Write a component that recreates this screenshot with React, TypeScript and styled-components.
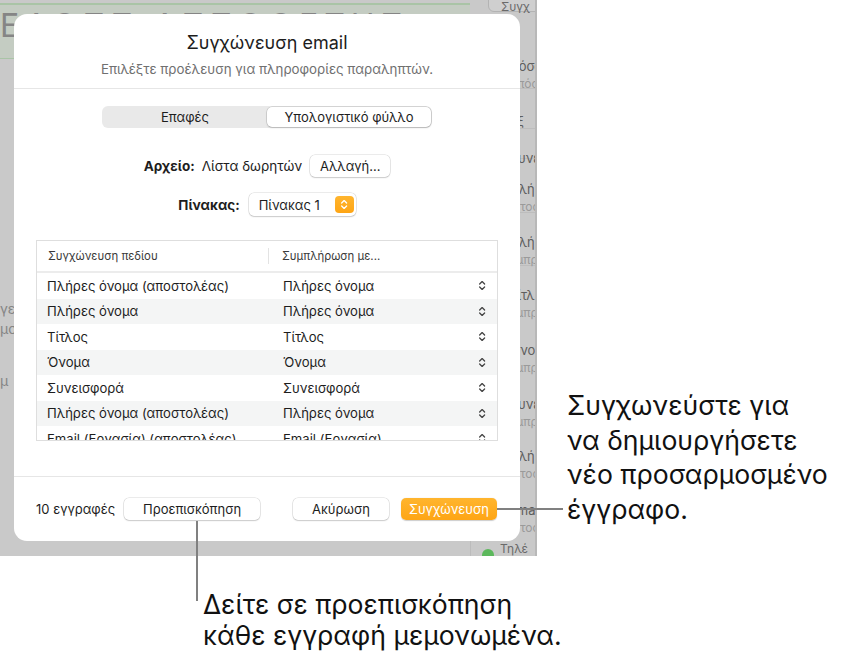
import React from "react";
import styled, { createGlobalStyle } from "styled-components";

const Global = createGlobalStyle`
  html, body { margin: 0; padding: 0; background: #fff; }
  body { font-family: Inter, "Noto Sans", sans-serif; -webkit-font-smoothing: antialiased; }
  * { box-sizing: border-box; }
`;

type Row = { field: string; value: string };

const rows: Row[] = [
  { field: "Πλήρες όνομα (αποστολέας)", value: "Πλήρες όνομα" },
  { field: "Πλήρες όνομα", value: "Πλήρες όνομα" },
  { field: "Τίτλος", value: "Τίτλος" },
  { field: "Όνομα", value: "Όνομα" },
  { field: "Συνεισφορά", value: "Συνεισφορά" },
  { field: "Πλήρες όνομα (αποστολέας)", value: "Πλήρες όνομα" },
  { field: "Email (Εργασία) (αποστολέας)", value: "Email (Εργασία)" },
];

// fragments of the app behind the sheet, only their first letters show
const sideItems = [
  { top: 44, title: "Πόσο", sub: "Υπόσ" },
  { top: 99, title: "Εξ", sub: "" },
  { top: 136, title: "Συνεύ", sub: "" },
  { top: 167, title: "Πλήρ", sub: "Ιστοσ" },
  { top: 220, title: "Πλήρ", sub: "Εμπρσ" },
  { top: 273, title: "Τίτλ", sub: "Εμπρσ" },
  { top: 328, title: "Όνομ", sub: "Εμπρσ" },
  { top: 382, title: "Συνε", sub: "Εμπρσ" },
  { top: 434, title: "Πλήρ", sub: "Ιστοσ" },
  { top: 488, title: "Email", sub: "Ιστοσ" },
];

const Page = styled.div`
  position: relative;
  width: 846px;
  height: 654px;
  background: #fff;
  overflow: hidden;
`;

const Shot = styled.div`
  position: relative;
  width: 537px;
  height: 556px;
  padding: 14px 0 0 14px;
  background: #c9c9c9;
  border-right: 2px solid #b8b8b8;
  overflow: hidden;
`;

const Backdrop = styled.div`
  position: absolute;
  inset: 0;
  z-index: 0;
`;

const TopBand = styled.div`
  position: absolute;
  left: 0;
  top: 3px;
  width: 470px;
  height: 56px;
  background: #c4ccc2;
  border-top: 2px solid #a9c4a6;
  border-bottom: 1px solid #a9c4a6;
  overflow: hidden;
  font-size: 32px;
  letter-spacing: 6px;
  color: #858585;
  line-height: 1;
  padding: 5px 0 0 0;
  white-space: nowrap;
`;

const TopTab = styled.div`
  position: absolute;
  left: 488px;
  top: -10px;
  width: 60px;
  height: 22px;
  border: 1px solid #b3b3b3;
  border-radius: 6px;
  background: #cfcfcf;
  font-size: 12px;
  color: #6a6a6a;
  padding: 8px 0 0 12px;
`;

const SideBar = styled.div`
  position: absolute;
  left: 470px;
  top: 14px;
  width: 80px;
  bottom: 0;
  border-left: 1px solid #bcbcbc;
`;

const SideItem = styled.div<{ $top: number }>`
  position: absolute;
  left: 38px;
  top: ${(p) => p.$top}px;
  font-size: 13px;
  line-height: 17px;
  color: #5e5e5e;
  white-space: nowrap;
`;

const SideSub = styled.div`
  color: #9a9a9a;
  font-size: 12px;
`;

const SideLine = styled.div<{ $top: number }>`
  position: absolute;
  left: 38px;
  right: 0;
  top: ${(p) => p.$top}px;
  height: 1px;
  background: #bdbdbd;
`;

const LeftText = styled.div<{ $top: number }>`
  position: absolute;
  left: -18px;
  top: ${(p) => p.$top}px;
  font-size: 14px;
  color: #858585;
  white-space: nowrap;
`;

const Dot = styled.div`
  position: absolute;
  left: 482px;
  top: 549px;
  width: 12px;
  height: 12px;
  border-radius: 50%;
  background: #5cb85c;
`;

const BottomText = styled.div`
  position: absolute;
  left: 500px;
  top: 541px;
  font-size: 12px;
  color: #6a6a6a;
`;

const Dialog = styled.div`
  position: relative;
  z-index: 1;
  width: 506px;
  height: 527px;
  background: #fff;
  border-radius: 13px;
  display: flex;
  flex-direction: column;
  overflow: hidden;
`;

const Header = styled.div`
  display: flex;
  flex-direction: column;
  align-items: center;
  height: 75px;
  padding-top: 18px;
  border-bottom: 1px solid #e6e6e6;
`;

const Title = styled.div`
  font-size: 18px;
  line-height: 22px;
  color: #1d1d1d;
`;

const Subtitle = styled.div`
  margin-top: 7px;
  font-size: 13.3px;
  line-height: 16px;
  color: #707070;
`;

const Body = styled.div`
  flex: 1;
  display: flex;
  flex-direction: column;
  align-items: center;
  padding-top: 17px;
  border-bottom: 1px solid #e6e6e6;
`;

const Segmented = styled.div`
  display: flex;
  width: 330px;
  height: 22px;
  padding: 1px;
  background: #e9e9e9;
  border-radius: 6px;
`;

const Segment = styled.div<{ $active?: boolean }>`
  flex: ${(p) => (p.$active ? "0 0 164px" : "1")};
  display: flex;
  align-items: center;
  justify-content: center;
  font-size: 13px;
  color: #1d1d1d;
  border-radius: 5px;
  background: ${(p) => (p.$active ? "#fff" : "transparent")};
  box-shadow: ${(p) =>
    p.$active ? "0 0 0 0.5px rgba(0,0,0,0.18), 0 1px 2px rgba(0,0,0,0.14)" : "none"};
`;

const FormRow = styled.div<{ $mt: number }>`
  display: flex;
  align-items: center;
  gap: 7px;
  margin-top: ${(p) => p.$mt}px;
  font-size: 13.5px;
  color: #1d1d1d;
`;

const Label = styled.span`
  font-weight: 700;
`;

const Button = styled.div<{ $w: number; $primary?: boolean }>`
  width: ${(p) => p.$w}px;
  height: 22px;
  display: flex;
  align-items: center;
  justify-content: center;
  font-size: 13px;
  border-radius: 5px;
  color: ${(p) => (p.$primary ? "#fff" : "#1d1d1d")};
  background: ${(p) => (p.$primary ? "linear-gradient(#ffb52e, #fea515)" : "#fff")};
  box-shadow: ${(p) =>
    p.$primary
      ? "0 0.5px 1px rgba(0,0,0,0.2)"
      : "0 0 0 0.5px rgba(0,0,0,0.16), 0 1px 1.5px rgba(0,0,0,0.14)"};
`;

const Popup = styled.div`
  width: 107px;
  height: 23px;
  display: flex;
  align-items: center;
  justify-content: space-between;
  padding: 0 2px 0 10px;
  border-radius: 5px;
  background: #fff;
  box-shadow: 0 0 0 0.5px rgba(0,0,0,0.16), 0 1px 1.5px rgba(0,0,0,0.14);
  margin-left: 2px;
  font-size: 13px;
`;

const Stepper = styled.div`
  width: 19px;
  height: 17px;
  border-radius: 4px;
  background: linear-gradient(#ffb52e, #fea515);
  display: flex;
  align-items: center;
  justify-content: center;
`;

const Table = styled.div`
  margin-top: 24px;
  width: 462px;
  height: 201px;
  border: 1px solid #dedede;
  overflow: hidden;
`;

const HeadRow = styled.div`
  display: flex;
  height: 32px;
  align-items: center;
  border-bottom: 2px solid #ececec;
  font-size: 11.4px;
  color: #3a3a3a;
`;

const HeadCell = styled.div<{ $sep?: boolean }>`
  width: ${(p) => (p.$sep ? "auto" : "231px")};
  flex: ${(p) => (p.$sep ? "1" : "none")};
  padding-left: ${(p) => (p.$sep ? "13px" : "11px")};
  border-left: ${(p) => (p.$sep ? "1px solid #e3e3e3" : "none")};
  line-height: 16px;
`;

const DataRow = styled.div<{ $alt: boolean }>`
  display: flex;
  align-items: center;
  height: 25.5px;
  font-size: 13.1px;
  color: #1d1d1d;
  background: ${(p) => (p.$alt ? "#f4f5f5" : "#fff")};
  white-space: nowrap;
`;

const FieldCell = styled.div`
  width: 246px;
  padding-left: 10px;
`;

const ValueCell = styled.div`
  flex: 1;
  display: flex;
  align-items: center;
  justify-content: space-between;
  padding-right: 11px;
`;

const Footer = styled.div`
  display: flex;
  align-items: center;
  height: 64px;
  padding: 0 23px 0 22px;
`;

const Count = styled.span`
  font-size: 13px;
  color: #1d1d1d;
  margin-right: 9px;
`;

const Spacer = styled.div`
  flex: 1;
`;

const HLine = styled.div`
  position: absolute;
  left: 497px;
  top: 508px;
  width: 66px;
  height: 2px;
  background: #808080;
  z-index: 2;
`;

const VLine = styled.div`
  position: absolute;
  left: 196px;
  top: 521px;
  width: 2px;
  height: 80px;
  background: #808080;
  z-index: 2;
`;

const Callout = styled.div<{ $left: number; $top: number; $lh: number }>`
  position: absolute;
  left: ${(p) => p.$left}px;
  top: ${(p) => p.$top}px;
  font-size: 26.6px;
  line-height: ${(p) => p.$lh}px;
  color: #111;
  white-space: nowrap;
`;

const UpDown = ({ color = "#444", size = 11 }: { color?: string; size?: number }) => (
  <svg width={size * 0.75} height={size} viewBox="0 0 8 12" fill="none">
    <path d="M1.3 4.4 L4 1.7 L6.7 4.4" stroke={color} strokeWidth="1.4" strokeLinecap="round" strokeLinejoin="round" />
    <path d="M1.3 7.6 L4 10.3 L6.7 7.6" stroke={color} strokeWidth="1.4" strokeLinecap="round" strokeLinejoin="round" />
  </svg>
);

export default function App() {
  return (
    <Page>
      <Global />
      <Shot>
        <Backdrop>
          <TopBand>ΕΛΟΣΣ ΑΣΣΟΘΕΤΗΣ</TopBand>
          <TopTab>Συγχ</TopTab>
          <SideBar>
            {[74, 114, 144, 198, 251].map((t) => (
              <SideLine key={t} $top={t} />
            ))}
            {sideItems.map((s, i) => (
              <SideItem key={i} $top={s.top}>
                {s.title}
                {s.sub && <SideSub>{s.sub}</SideSub>}
              </SideItem>
            ))}
          </SideBar>
          <LeftText $top={300}>Συγε</LeftText>
          <LeftText $top={320}>Σημσ</LeftText>
          <LeftText $top={372}>Σύμ</LeftText>
          <Dot />
          <BottomText>Τηλέ</BottomText>
        </Backdrop>

        <Dialog>
          <Header>
            <Title>Συγχώνευση email</Title>
            <Subtitle>Επιλέξτε προέλευση για πληροφορίες παραληπτών.</Subtitle>
          </Header>

          <Body>
            <Segmented>
              <Segment>Επαφές</Segment>
              <Segment $active>Υπολογιστικό φύλλο</Segment>
            </Segmented>

            <FormRow $mt={27}>
              <Label>Αρχείο:</Label>
              <span>Λίστα δωρητών</span>
              <Button $w={80} style={{ marginLeft: 1 }}>Αλλαγή...</Button>
            </FormRow>

            <FormRow $mt={16}>
              <Label>Πίνακας:</Label>
              <Popup>
                <span>Πίνακας 1</span>
                <Stepper>
                  <UpDown color="#fff" size={11} />
                </Stepper>
              </Popup>
            </FormRow>

            <Table>
              <HeadRow>
                <HeadCell>Συγχώνευση πεδίου</HeadCell>
                <HeadCell $sep>Συμπλήρωση με...</HeadCell>
              </HeadRow>
              {rows.map((r, i) => (
                <DataRow key={i} $alt={i % 2 === 1}>
                  <FieldCell>{r.field}</FieldCell>
                  <ValueCell>
                    <span>{r.value}</span>
                    <UpDown />
                  </ValueCell>
                </DataRow>
              ))}
            </Table>
          </Body>

          <Footer>
            <Count>10 εγγραφές</Count>
            <Button $w={136}>Προεπισκόπηση</Button>
            <Spacer />
            <Button $w={96}>Ακύρωση</Button>
            <Button $w={96} $primary style={{ marginLeft: 12 }}>
              Συγχώνευση
            </Button>
          </Footer>
        </Dialog>
      </Shot>

      <HLine />
      <VLine />
      <Callout $left={567} $top={388} $lh={34.6}>
        Συγχωνεύστε για
        <br />
        να δημιουργήσετε
        <br />
        νέο προσαρμοσμένο
        <br />
        έγγραφο.
      </Callout>
      <Callout $left={203} $top={589} $lh={31}>
        Δείτε σε προεπισκόπηση
        <br />
        κάθε εγγραφή μεμονωμένα.
      </Callout>
    </Page>
  );
}
